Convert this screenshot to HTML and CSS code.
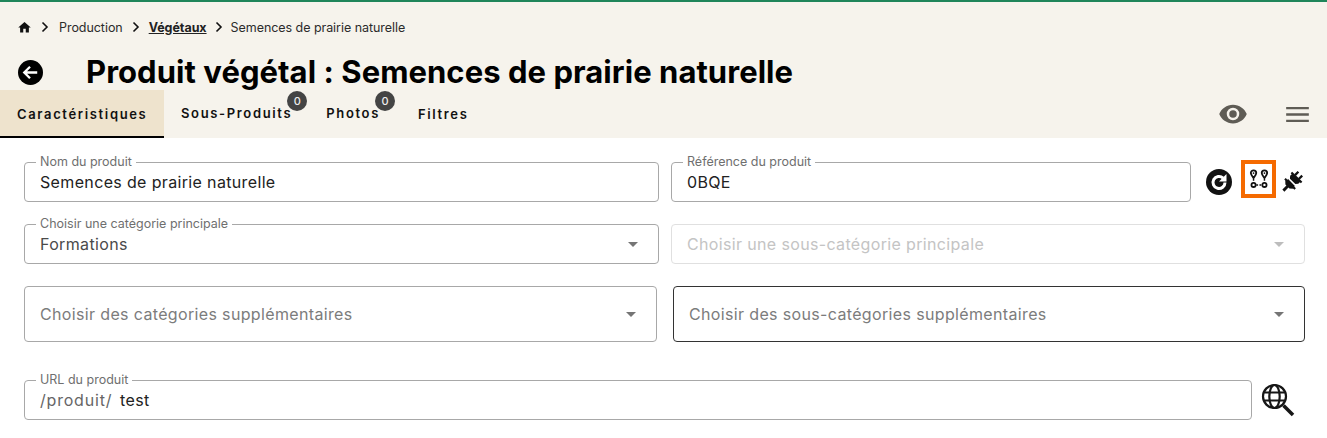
FILE: index.html
```html
<!DOCTYPE html>
<html>
<head>
  <title>Produit végétal</title>
  <link rel="stylesheet" href="styles.css">
</head>
<body>
  <div class="header">
    <div class="breadcrumb">
      <svg class="home" viewBox="0 0 24 24"><path d="M10 20v-6h4v6h5v-8h3L12 3 2 12h3v8z"/></svg>
      <svg class="chev first" viewBox="0 0 10 12"><path d="M2.500 1.500 7 6l-4.500 4.500"/></svg>
      <span>Production</span>
      <svg class="chev" viewBox="0 0 10 12"><path d="M2.500 1.500 7 6l-4.500 4.500"/></svg>
      <a href="#">Végétaux</a>
      <svg class="chev last" viewBox="0 0 10 12"><path d="M2.500 1.500 7 6l-4.500 4.500"/></svg>
      <span>Semences de prairie naturelle</span>
    </div>

    <div class="title-row">
      <svg class="back" viewBox="0 0 26 26">
        <circle cx="13" cy="13" r="13"/>
        <path d="M20 13H7M12.500 7 6.500 13l6 6"/>
      </svg>
      <h1>Produit végétal : Semences de prairie naturelle</h1>
    </div>

    <div class="tabs">
      <div class="tab active">Caractéristiques</div>
      <div class="tab sous">Sous-Produits<span class="badge">0</span></div>
      <div class="tab photos">Photos<span class="badge">0</span></div>
      <div class="tab filtres">Filtres</div>
      <div class="tab-tools">
        <svg class="eye" viewBox="0 0 24 24"><path d="M12 4.500C7 4.500 2.700 7.600 1 12c1.700 4.400 6 7.500 11 7.500s9.300-3.100 11-7.500c-1.700-4.400-6-7.500-11-7.500zM12 17a5 5 0 1 1 0-10 5 5 0 0 1 0 10zm0-8a3 3 0 1 0 0 6 3 3 0 0 0 0-6z"/></svg>
        <svg class="menu" viewBox="0 0 24 18"><path d="M0 1h24v2.400H0zM0 7.800h24v2.400H0zM0 14.600h24V17H0z"/></svg>
      </div>
    </div>
  </div>

  <div class="content">
    <div class="row row-one">
      <div class="field name-field">
        <label>Nom du produit</label>
        <div class="value">Semences de prairie naturelle</div>
      </div>
      <div class="field ref-field">
        <label>Référence du produit</label>
        <div class="value">0BQE</div>
      </div>
      <div class="actions">
        <svg class="refresh" viewBox="0 0 26 26">
          <circle cx="13" cy="13" r="13"/>
          <path class="hollow" d="M19 13.500a6 6 0 1 1-1.900-4.400"/>
          <path class="tip" d="M20.500 5v7.500H13z"/>
        </svg>
        <div class="route-box">
          <svg class="route" viewBox="0 0 22 22">
            <path class="pin" d="M5 1.500a3 3 0 0 0-3 3c0 2 3 5.500 3 5.500s3-3.500 3-5.500a3 3 0 0 0-3-3z"/>
            <path class="pin" d="M17 1.500a3 3 0 0 0-3 3c0 2 3 5.500 3 5.500s3-3.500 3-5.500a3 3 0 0 0-3-3z"/>
            <circle cx="5" cy="4.500" r="1" class="dot"/>
            <circle cx="17" cy="4.500" r="1" class="dot"/>
            <circle cx="5" cy="17.500" r="2.300" class="pin"/>
            <circle cx="17" cy="17.500" r="2.300" class="pin"/>
            <path class="dash" d="M5 11v4M8 17.500h6.500M17 11v4"/>
          </svg>
        </div>
        <svg class="plug" viewBox="0 0 24 24">
          <g transform="rotate(45 12 12)">
            <path d="M8 -1h2.400v5H8zM13.600 -1H16v5h-2.400z"/>
            <path d="M4.500 3.500h15v2.200h-1.500V8l-2 2.300H8L6 8V5.700H4.500z"/>
            <path d="M7 12h10v1h2.500v2.200H18L15 18h-1.500v6h-3v-6H9l-3-2.800H4.500V13H7z"/>
          </g>
        </svg>
      </div>
    </div>

    <div class="row row-two">
      <div class="field">
        <label>Choisir une catégorie principale</label>
        <div class="value muted">Formations</div>
        <span class="arrow"></span>
      </div>
      <div class="field disabled">
        <div class="value">Choisir une sous-catégorie principale</div>
        <span class="arrow"></span>
      </div>
    </div>

    <div class="row row-three">
      <div class="field tall">
        <div class="value placeholder">Choisir des catégories supplémentaires</div>
        <span class="arrow"></span>
      </div>
      <div class="field tall focused">
        <div class="value placeholder">Choisir des sous-catégories supplémentaires</div>
        <span class="arrow"></span>
      </div>
    </div>

    <div class="row row-four">
      <div class="field url-field">
        <label>URL du produit</label>
        <div class="value"><span class="prefix">/produit/</span> test</div>
      </div>
      <svg class="globe" viewBox="0 0 34 34">
        <circle cx="13.500" cy="13.500" r="11.500"/>
        <ellipse cx="13.500" cy="13.500" rx="5.200" ry="11.500"/>
        <path d="M3 9.500h21M3 17.500h21"/>
        <path class="handle" d="M22.500 22.500 32 32"/>
      </svg>
    </div>
  </div>
</body>
</html>
```

FILE: styles.css
```css
body {
  margin: 0;
  font-family: Inter, 'Noto Sans', sans-serif;
  color: #111;
  background: white;
  overflow: hidden;
}

.header {
  height: 136px;
  background: #f6f3ec;
  border-top: 2px solid #1f855a;
}

.breadcrumb {
  display: flex;
  align-items: center;
  height: 20px;
  padding: 15px 0 1px 17px;
  font-size: 12.500px;
  letter-spacing: -0.05px;
  color: #2b2b2b;
}
.breadcrumb a {
  color: #222;
  font-weight: 700;
}
.home {
  width: 15px;
  height: 15px;
  fill: #111;
}
.chev {
  width: 10px;
  height: 12px;
  margin: 0 8px;
  fill: none;
  stroke: #111;
  stroke-width: 1.600;
}
.chev.first {
  margin: 0 9px 0 8px;
}
.chev.last {
  margin: 0 7px;
}

.title-row {
  display: flex;
  align-items: center;
  height: 34px;
  padding: 17px 0 1px 18px;
}
.back {
  width: 25px;
  height: 25px;
  margin-right: 43px;
}
.back circle {
  fill: #000;
}
.back path {
  fill: none;
  stroke: white;
  stroke-width: 2.400;
}
h1 {
  margin: 0;
  font-size: 31px;
  line-height: 34px;
  font-weight: 700;
  letter-spacing: 0.05px;
  color: #000;
}

.tabs {
  display: flex;
  align-items: center;
  height: 48px;
  font-size: 13px;
  font-weight: 600;
  letter-spacing: 1.650px;
}
.tab {
  position: relative;
  line-height: 46px;
}
.tab.active {
  width: 164px;
  padding: 2px 0 0 17px;
  line-height: 44px;
  box-sizing: border-box;
  background: #eee3cd;
  border-bottom: 2px solid #000;
  margin-right: 17px;
}
.sous {
  line-height: 44px;
  margin: 0 34px 2px 0;
}
.photos {
  line-height: 44px;
  margin: 0 38px 2px 0;
}
.badge {
  position: absolute;
  top: 0;
  right: -15px;
  width: 20px;
  height: 20px;
  border-radius: 50%;
  background: #444;
  color: #eee;
  font-size: 11px;
  font-weight: 500;
  letter-spacing: 0;
  line-height: 20px;
  text-align: center;
}
.tab-tools {
  display: flex;
  align-items: center;
  margin-left: auto;
  padding-right: 18px;
  gap: 38px;
}
.eye {
  width: 30px;
  height: 30px;
  fill: #5f5c55;
}
.menu {
  width: 23px;
  height: 17px;
  fill: #5f5c55;
}

.content {
  padding: 24px 22px 0 24px;
}
.row {
  display: flex;
}
.row-one, .row-two {
  gap: 12px;
  margin-bottom: 22px;
}
.row-three {
  gap: 16px;
  margin-bottom: 38px;
}

.field {
  position: relative;
  box-sizing: border-box;
  flex: 1;
  height: 40px;
  border: 1px solid #a8a8a8;
  border-radius: 4px;
  padding: 0 15px;
}
.field label {
  position: absolute;
  top: -8px;
  left: 11px;
  padding: 0 4px;
  background: white;
  font-size: 12.500px;
  line-height: 14px;
  color: #6f6f6f;
}
.value {
  font-size: 16px;
  letter-spacing: 0.35px;
  line-height: 20px;
  padding-top: 9px;
  color: #222;
}
.value.muted {
  color: #4a4a4a;
}
.arrow {
  position: absolute;
  top: 50%;
  right: 20px;
  margin-top: -2px;
  border-left: 5px solid transparent;
  border-right: 5px solid transparent;
  border-top: 5px solid #757575;
}
.tall {
  height: 56px;
}
.tall .value {
  padding-top: 17px;
}
.placeholder {
  color: #7c7c7c;
}
.focused {
  border-color: #333;
}
.disabled {
  border-color: #e0e0e0;
}
.disabled .value {
  color: #c4c4c4;
}
.disabled .arrow {
  border-top-color: #bdbdbd;
}

.name-field, .row-two .field:first-child {
  flex: none;
  width: 635px;
}
.ref-field {
  flex: none;
  width: 520px;
}
.row-three .field:first-child {
  flex: none;
  width: 633px;
}
.actions {
  display: flex;
  align-items: center;
  height: 40px;
  margin-left: 3px;
}
.refresh {
  width: 26px;
  height: 26px;
}
.refresh circle {
  fill: #111;
}
.refresh .hollow {
  fill: none;
  stroke: white;
  stroke-width: 3;
}
.refresh .tip {
  fill: white;
}
.route-box {
  box-sizing: border-box;
  display: flex;
  align-items: center;
  justify-content: center;
  width: 35px;
  height: 38px;
  margin: 0 0 6px 9px;
  border: 4px solid #f56a00;
}
.route {
  width: 20px;
  height: 20px;
  flex: none;
  fill: none;
  stroke: #111;
  stroke-width: 2;
}
.route .dot {
  fill: #111;
  stroke: none;
}
.route .dash {
  stroke-dasharray: 2 1.500;
  stroke-width: 1.600;
}
.plug {
  width: 23px;
  height: 23px;
  margin-left: 4px;
  fill: #111;
}

.url-field {
  flex: none;
  width: 1228px;
}
.prefix {
  color: #666;
  margin-right: 3px;
  letter-spacing: 0.8px;
}
.globe {
  width: 34px;
  height: 34px;
  margin: 3px 0 0 9px;
  fill: none;
  stroke: #161616;
  stroke-width: 2.200;
}
.globe .handle {
  stroke-width: 3.600;
}
```
